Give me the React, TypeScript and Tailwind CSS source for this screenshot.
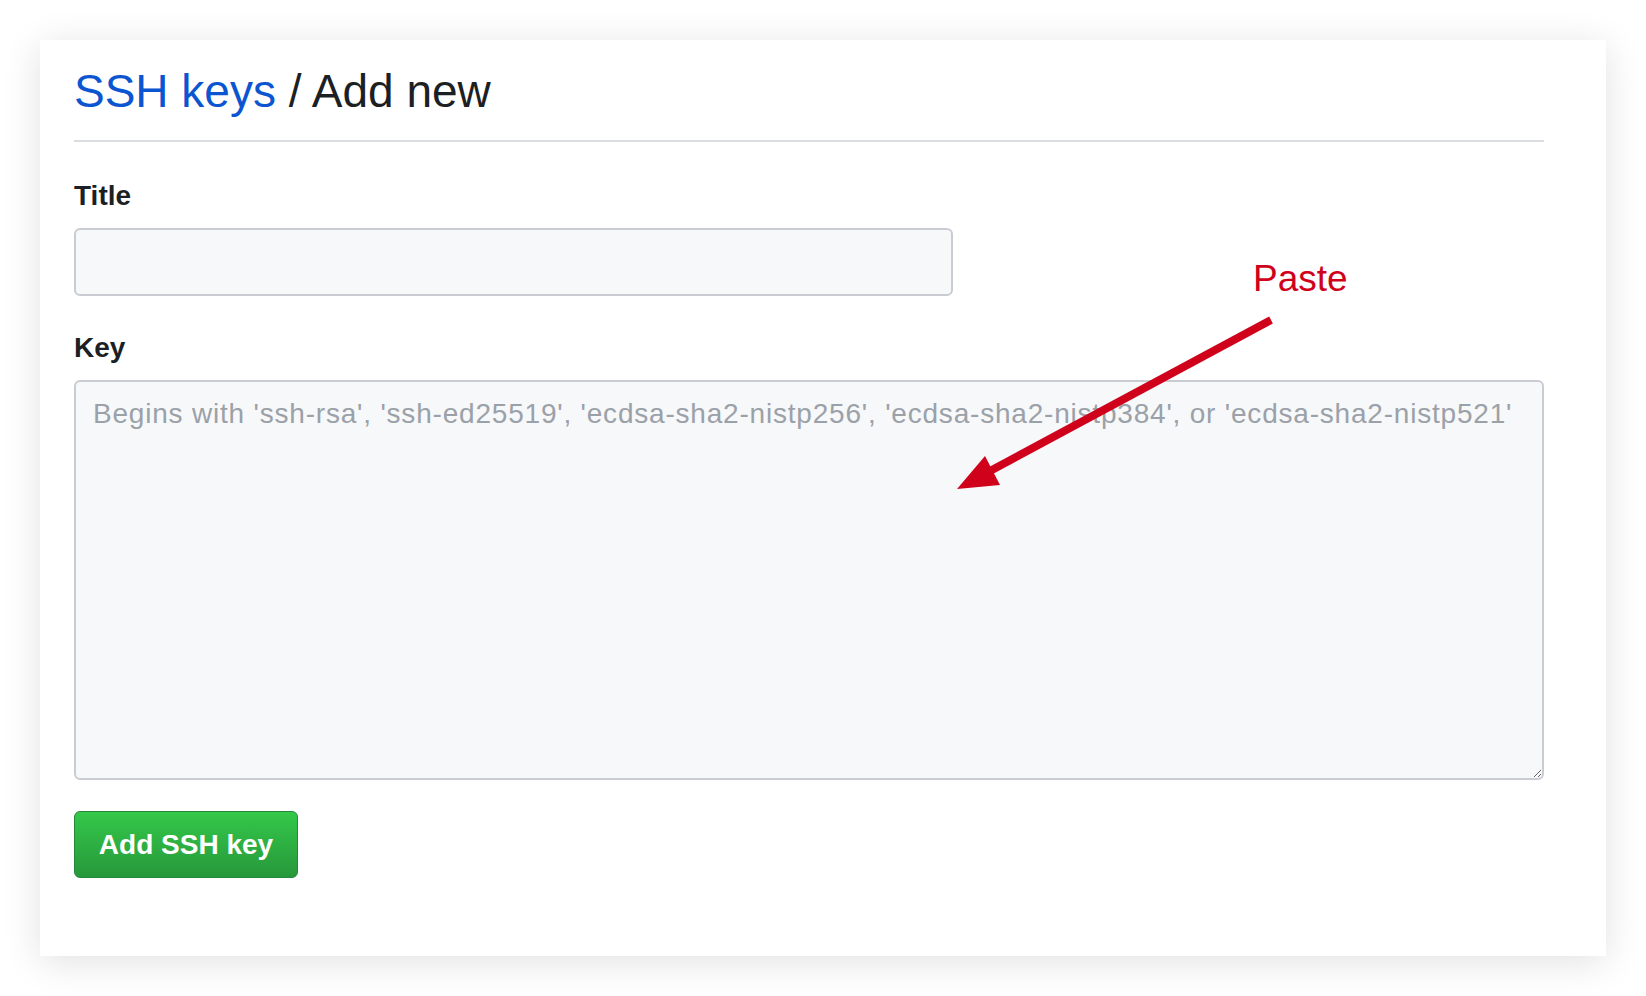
export default function App() {
  return (
    <div className="min-h-screen bg-white pt-[40px] pl-[40px]" style={{ fontFamily: '"Liberation Sans", Arial, sans-serif' }}>
      <div className="relative w-[1566px] h-[916px] bg-white shadow-[0_6px_36px_rgba(0,0,0,0.12)] pt-[23px] pl-[34px] pr-[62px]">
        <h1 className="text-[46px] leading-[56px] font-normal text-[#1c1f23] pb-[21px] border-b-2 border-[#d9dde1]">
          <span className="text-[#0b55d1]">SSH keys</span> / Add new
        </h1>

        <label className="block mt-[38px] text-[28px] leading-[32px] font-bold text-[#1c1f23]">Title</label>
        <input
          type="text"
          className="block mt-[16px] w-[879px] h-[68px] rounded-[6px] border-2 border-[#c9ccd2] bg-[#f7f8fa] px-4 text-[27px] outline-none"
        />

        <label className="block mt-[36px] text-[28px] leading-[32px] font-bold text-[#1c1f23]">Key</label>
        <textarea
          placeholder="Begins with 'ssh-rsa', 'ssh-ed25519', 'ecdsa-sha2-nistp256', 'ecdsa-sha2-nistp384', or 'ecdsa-sha2-nistp521'"
          className="block mt-[16px] w-full h-[400px] rounded-[6px] border-2 border-[#c9ccd2] bg-[#f7f8fa] pt-[14px] px-[17px] text-[28px] leading-[36px] tracking-[0.8px] text-[#1c1f23] placeholder:text-[#9ba1a8] outline-none"
        />

        <button className="mt-[31px] w-[224px] h-[67px] rounded-[6px] border border-[#23883a] bg-linear-to-b from-[#34c84a] to-[#27983a] text-white text-[28px] font-bold">
          Add SSH key
        </button>

        {/* annotation */}
        <div className="absolute left-[1213px] top-[220px] text-[37px] leading-[37px] text-[#d0021b]">Paste</div>
        <svg className="absolute left-0 top-0 pointer-events-none" width="1566" height="916">
          <line x1="1231" y1="280" x2="950" y2="431" stroke="#d0021b" strokeWidth="8" />
          <polygon points="917,449 945,416 960,445" fill="#d0021b" />
        </svg>
      </div>
    </div>
  )
}
